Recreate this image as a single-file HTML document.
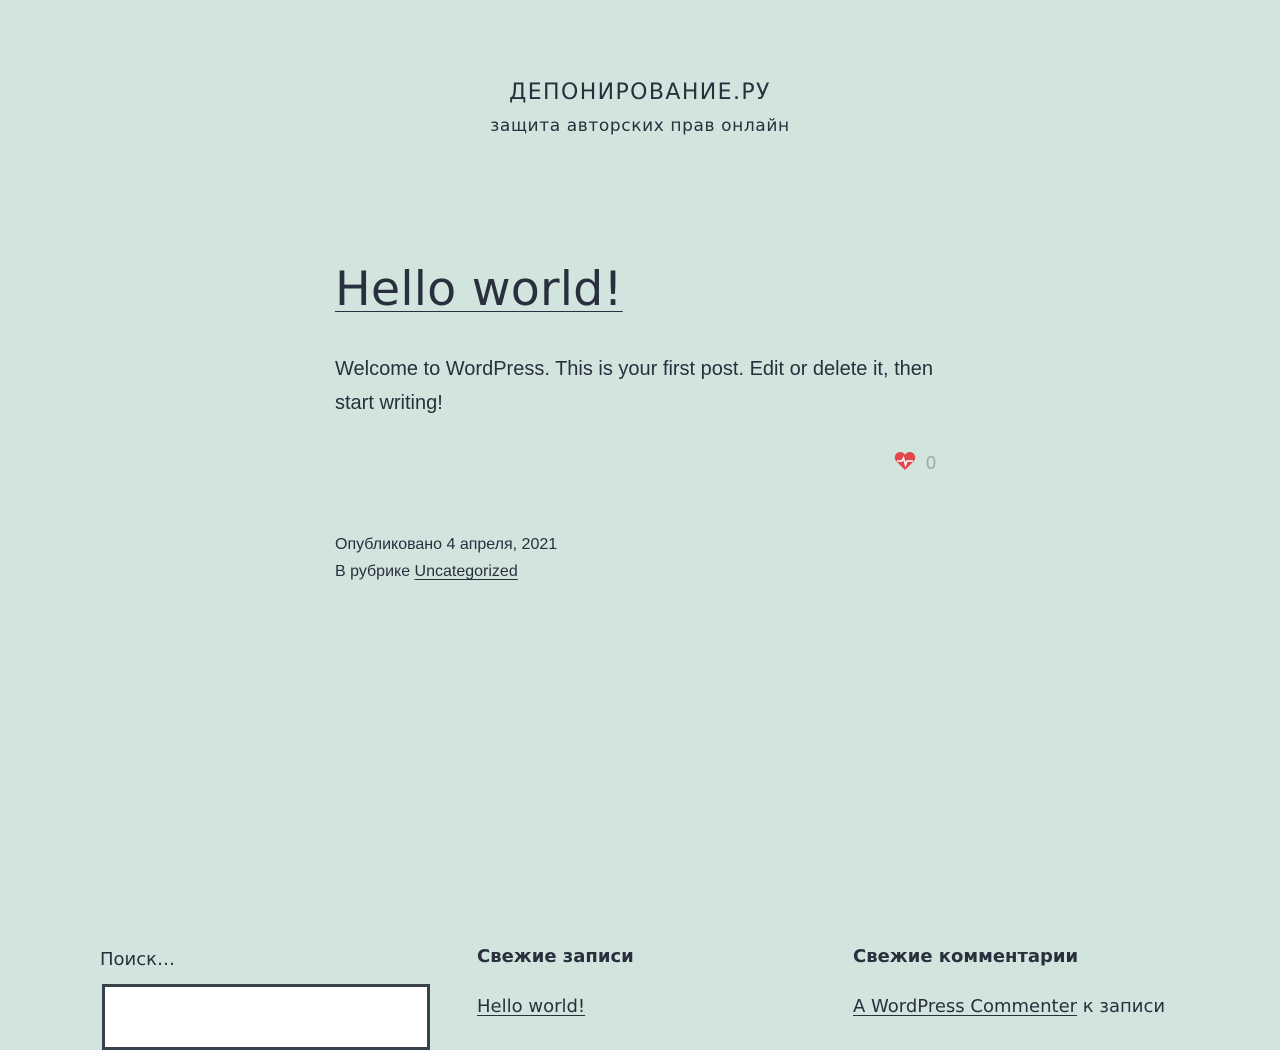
<!DOCTYPE html>
<html><head><meta charset="utf-8"><style>
body{margin:0;background:#d1e4dd;color:#28303d;width:1280px;height:1024px;overflow:hidden;position:relative;font-family:"DejaVu Sans",sans-serif}
.a{position:absolute;white-space:nowrap}
a{color:#28303d;text-decoration:underline;text-underline-offset:3px;text-decoration-thickness:1px}
</style></head><body>
<div class="a" style="left:0;width:1280px;text-align:center;top:80px;font-size:22px;letter-spacing:1.4px">ДЕПОНИРОВАНИЕ.РУ</div>
<div class="a" style="left:0;width:1280px;text-align:center;top:116px;font-size:17px;letter-spacing:0.6px">защита авторских прав онлайн</div>
<div class="a" style="left:335px;top:262px;font-size:47.5px;letter-spacing:0.2px"><a href="#" style="text-underline-offset:6px">Hello world!</a></div>
<div class="a" style="left:335px;top:352px;font-size:20px;line-height:34px;font-family:'Liberation Sans',sans-serif;white-space:normal;width:620px">Welcome to WordPress. This is your first post. Edit or delete it, then start writing!</div>
<svg class="a" style="left:894px;top:451px" width="22" height="20" viewBox="0 0 22 20"><path d="M11 19 L2 10 C-1 6 2 1 6 1 C8 1 10 2 11 4 C12 2 14 1 16 1 C20 1 23 6 20 10 Z" fill="#e2474c"/><path d="M3 10 H8 L9.5 7 L11.5 14 L13 10 H19" stroke="#fff" stroke-width="1.5" fill="none"/></svg>
<div class="a" style="left:926px;top:453px;font-size:18px;color:#9eaaa5;font-family:'Liberation Sans',sans-serif">0</div>
<div class="a" style="left:335px;top:536px;font-size:16px;font-family:'Liberation Sans',sans-serif">Опубликовано 4 апреля, 2021</div>
<div class="a" style="left:335px;top:563px;font-size:16px;font-family:'Liberation Sans',sans-serif">В рубрике <a href="#">Uncategorized</a></div>
<div class="a" style="left:100px;top:949px;font-size:18px">Поиск…</div>
<div class="a" style="left:102px;top:984px;width:322px;height:60px;background:#fff;border:3px solid #39414d"></div>
<div class="a" style="left:477px;top:946px;font-size:18px;font-weight:bold">Свежие записи</div>
<div class="a" style="left:477px;top:996px;font-size:18px"><a href="#">Hello world!</a></div>
<div class="a" style="left:853px;top:946px;font-size:18px;font-weight:bold">Свежие комментарии</div>
<div class="a" style="left:853px;top:996px;font-size:18px"><a href="#">A WordPress Commenter</a> к записи</div>
</body></html>
